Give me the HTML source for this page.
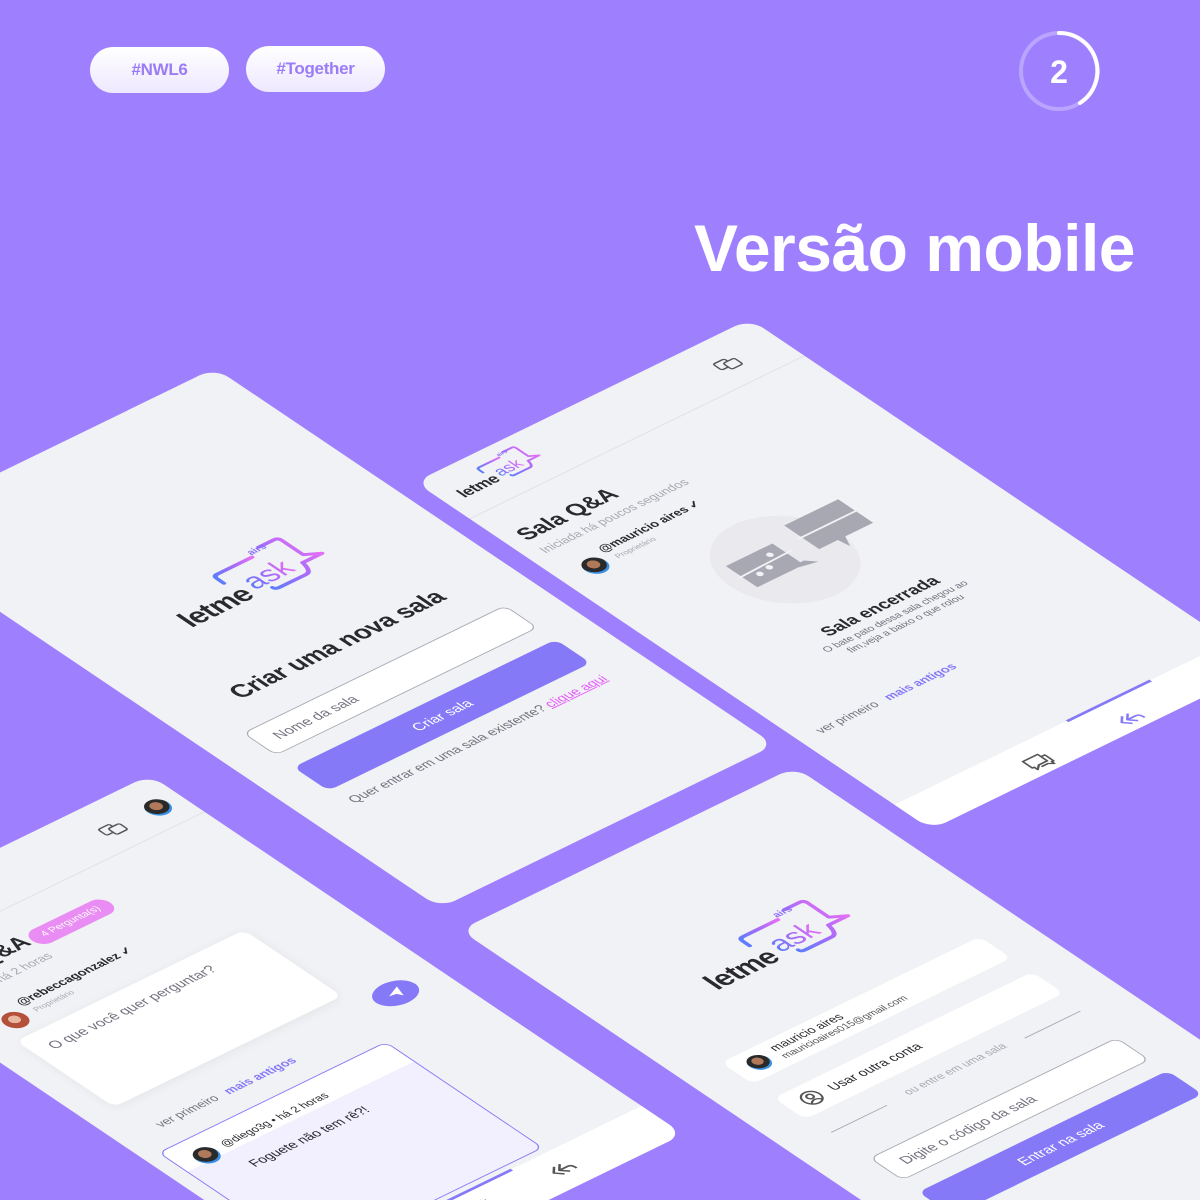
<!DOCTYPE html>
<html><head><meta charset="utf-8">
<style>
*{margin:0;padding:0;box-sizing:border-box}
html,body{width:1200px;height:1200px;overflow:hidden}
body{background:#9e7ffd;font-family:"Liberation Sans",sans-serif;position:relative}
.pill{position:absolute;height:46px;border-radius:23px;background:linear-gradient(#ffffff,#eee8ff);color:#9a7cf6;font-weight:bold;font-size:17px;display:flex;align-items:center;justify-content:center;letter-spacing:-0.3px}
.title{position:absolute;right:65px;top:210px;color:#fff;font-weight:bold;font-size:66px;letter-spacing:-0.5px;white-space:nowrap}
.scr{position:absolute;left:0;top:0;width:360px;background:#f1f2f5;border-radius:16px;transform-origin:0 0;overflow:hidden}
.abs{position:absolute;white-space:nowrap}
.inp{position:absolute;background:#fff;border:1px solid #a8a8b3;border-radius:8px;color:#737380;font-size:14px;padding-left:16px;display:flex;align-items:center}
.btn{position:absolute;background:#8579f8;border-radius:8px;color:#fff;font-size:14px;display:flex;align-items:center;justify-content:center}
.av{position:absolute;border-radius:50%;background:radial-gradient(circle at 50% 40%,#b07a5a 0 30%,#2a2a2a 32% 60%,#3a8fe0 62%)}
.gray{color:#a8a8b3}
.card{position:absolute;background:#fff;border-radius:8px}
</style></head><body>

<div class="pill" style="left:90px;top:47px;width:139px">#NWL6</div>
<div class="pill" style="left:246px;top:46px;width:139px">#Together</div>

<svg style="position:absolute;left:1016px;top:28px" width="86" height="86" viewBox="0 0 86 86">
<circle cx="43" cy="43" r="38" fill="none" stroke="#b9a5ff" stroke-width="4"/>
<path d="M43 5 A38 38 0 0 1 64 75" fill="none" stroke="#fff" stroke-width="4" stroke-linecap="round"/>
<text x="43" y="55" text-anchor="middle" font-family="Liberation Sans" font-weight="bold" font-size="32" fill="#fff">2</text>
</svg>

<div class="title">Versão mobile</div>

<svg width="0" height="0" style="position:absolute">
<defs>
<linearGradient id="lg" x1="0" y1="0" x2="1" y2="0"><stop offset="0" stop-color="#5e7dfa"/><stop offset="0.5" stop-color="#a46cf9"/><stop offset="1" stop-color="#e56ff5"/></linearGradient>
<symbol id="logo" viewBox="0 0 140 60">
<path d="M56 24 V17 Q56 13 60 13 H94" fill="none" stroke="url(#lg)" stroke-width="3.5" stroke-linecap="round"/>
<path d="M106 7 H121 Q125 7 125 11 V33 L137 40 H118 Q116 52 110 52 H84 Q80 52 80 49" fill="none" stroke="url(#lg)" stroke-width="3.5" stroke-linejoin="round" stroke-linecap="round"/>
<text x="95" y="11" font-family="Liberation Sans" font-weight="bold" font-size="9" fill="#8a6cfa">airs</text>
<text x="0" y="50" font-family="Liberation Sans" font-weight="bold" font-size="25" fill="#29292e" letter-spacing="-0.5">letme</text>
<text x="68" y="44" font-family="Liberation Sans" font-size="26" fill="url(#lg)">ask</text>
</symbol>
<symbol id="copy" viewBox="0 0 22 16"><rect x="1" y="1" width="12" height="10" rx="2" fill="none" stroke="#555" stroke-width="1.6"/><rect x="8" y="5" width="12" height="10" rx="2" fill="#f1f2f5" stroke="#555" stroke-width="1.6"/></symbol>
<symbol id="reply" viewBox="0 0 24 16"><path d="M9 2 L3 8 L9 14 M15 2 L9 8 L15 14 M9 8 H18 Q22 8 22 14" fill="none" stroke="currentColor" stroke-width="2" stroke-linejoin="round"/></symbol>
<symbol id="chat" viewBox="0 0 24 20"><path d="M2 2 H18 V13 H9 L4 17 V13 H2 Z M18 6 H22 V16 H20 V19 L16 16 H9" fill="none" stroke="#555" stroke-width="1.8" stroke-linejoin="round"/></symbol>
</defs></svg>

<!-- left top screen -->
<div class="scr" style="height:640px;transform:matrix(0.93,-0.453,0.875,0.589,-120,531)">
 <svg class="abs" style="left:104px;top:190px" width="155" height="66"><use href="#logo"/></svg>
 <div class="abs" style="left:0;width:360px;text-align:center;top:318px;font-weight:bold;font-size:24px;color:#29292e;letter-spacing:-0.3px">Criar uma nova sala</div>
 <div class="inp" style="left:39px;top:373px;width:282px;height:38px">Nome da sala</div>
 <div class="btn" style="left:39px;top:431px;width:282px;height:40px">Criar sala</div>
 <div class="abs" style="left:0;width:360px;text-align:center;top:484px;font-size:13px;color:#737380">Quer entrar em uma sala existente? <span style="color:#e559f9;text-decoration:underline">clique aqui</span></div>
</div>

<!-- middle screen -->
<div class="scr" style="height:590px;transform:matrix(0.93,-0.453,0.875,0.589,415,482)">
 <svg class="abs" style="left:16px;top:8px" width="88" height="38"><use href="#logo"/></svg>
 <svg class="abs" style="left:294px;top:26px" width="22" height="16"><use href="#copy"/></svg>
 <div class="abs" style="left:0;top:62px;width:360px;border-top:1px solid #e0e0e4"></div>
 <div class="abs" style="left:15px;top:92px;font-weight:bold;font-size:22px;color:#29292e">Sala Q&amp;A</div>
 <div class="abs gray" style="left:15px;top:122px;font-size:12px">Iniciada há poucos segundos</div>
 <div class="av" style="left:24px;top:158px;width:22px;height:22px"></div>
 <div class="abs" style="left:52px;top:149px;font-size:12px;font-weight:bold;color:#29292e">@mauricio aires ✓</div>
 <div class="abs gray" style="left:56px;top:166px;font-size:8px">Proprietário</div>
 <div class="abs" style="left:100px;top:195px;width:118px;height:118px;border-radius:50%;background:#e9e9ee"></div>
 <svg class="abs" style="left:108px;top:212px" width="150" height="80" viewBox="0 0 150 80">
  <path d="M8 20 H58 V52 H62 L70 60 L52 56 H8 Z" fill="#a8a8b3"/>
  <line x1="4" y1="38" x2="64" y2="36" stroke="#f1f2f5" stroke-width="2"/>
  <circle cx="22" cy="44" r="3" fill="#f1f2f5"/><circle cx="34" cy="42" r="3" fill="#f1f2f5"/><circle cx="46" cy="30" r="3" fill="#f1f2f5"/>
  <path d="M82 8 H140 V48 H110 L104 60 L102 48 H82 Z" fill="#a8a8b3"/>
  <line x1="78" y1="28" x2="144" y2="28" stroke="#f1f2f5" stroke-width="2"/>
 </svg>
 <div class="abs" style="left:0;width:350px;text-align:center;top:336px;font-weight:bold;font-size:17px;color:#29292e">Sala encerrada</div>
 <div class="abs gray" style="left:0;width:350px;text-align:center;top:358px;font-size:10px;line-height:12px;color:#737380">O bate pato dessa sala chegou ao<br>fim,veja a baixo o que rolou</div>
 <div class="abs" style="left:20px;top:432px;font-size:12px;color:#737380">ver primeiro &nbsp; <b style="color:#8579f8">mais antigos</b></div>
 <div class="abs" style="left:0;top:548px;width:360px;height:42px;background:#fff"></div>
 <div class="abs" style="left:185px;top:547px;width:90px;height:3px;background:#8579f8"></div>
 <svg class="abs" style="left:118px;top:565px" width="24" height="20"><use href="#chat"/></svg>
 <svg class="abs" style="left:215px;top:568px;color:#8579f8" width="24" height="16"><use href="#reply"/></svg>
</div>

<!-- bottom right screen -->
<div class="scr" style="height:700px;transform:matrix(0.93,-0.453,0.875,0.589,460,930)">
 <svg class="abs" style="left:104px;top:128px" width="155" height="66"><use href="#logo"/></svg>
 <div class="card" style="left:40px;top:256px;width:278px;height:36px">
  <div class="av" style="left:14px;top:8px;width:20px;height:20px"></div>
  <div class="abs" style="left:44px;top:4px;font-size:12px;color:#29292e">mauricio aires</div>
  <div class="abs" style="left:44px;top:19px;font-size:10px;color:#555">mauricioaires015@gmail.com</div>
 </div>
 <div class="card" style="left:40px;top:316px;width:278px;height:36px">
  <svg class="abs" style="left:14px;top:8px" width="20" height="20" viewBox="0 0 20 20"><circle cx="10" cy="10" r="8.5" fill="none" stroke="#555" stroke-width="1.8"/><circle cx="10" cy="8" r="3" fill="none" stroke="#555" stroke-width="1.8"/><path d="M4.5 16 Q10 10 15.5 16" fill="none" stroke="#555" stroke-width="1.8"/></svg>
  <div class="abs" style="left:44px;top:10px;font-size:13px;color:#29292e">Usar outra conta</div>
 </div>
 <div class="abs" style="left:44px;top:377px;width:60px;border-top:1px solid #a8a8b3"></div>
 <div class="abs gray" style="left:0;width:360px;text-align:center;top:369px;font-size:11px">ou entre em uma sala</div>
 <div class="abs" style="left:252px;top:377px;width:60px;border-top:1px solid #a8a8b3"></div>
 <div class="inp" style="left:44px;top:421px;width:266px;height:38px">Digite o código da sala</div>
 <div class="btn" style="left:43px;top:478px;width:268px;height:40px">Entrar na sala</div>
</div>

<!-- bottom left screen -->
<div class="scr" style="height:610px;transform:matrix(0.93,-0.453,0.875,0.589,-185,938)">
 <svg class="abs" style="left:276px;top:28px" width="22" height="16"><use href="#copy"/></svg>
 <div class="av" style="left:324px;top:25px;width:22px;height:22px"></div>
 <div class="abs" style="left:0;top:62px;width:360px;border-top:1px solid #e0e0e4"></div>
 <div class="abs" style="left:30px;top:90px;font-weight:bold;font-size:22px;color:#29292e">Sala Q&amp;A</div>
 <div class="abs" style="left:133px;top:96px;width:84px;height:22px;border-radius:11px;background:#e98cf3;color:#fff;font-size:10px;text-align:center;line-height:22px">4 Pergunta(s)</div>
 <div class="abs gray" style="left:30px;top:122px;font-size:12px">Iniciada há 2 horas</div>
 <div class="av" style="left:38px;top:166px;width:22px;height:22px;background:radial-gradient(circle at 50% 45%,#e8b8a0 0 30%,#b5503a 32%)"></div>
 <div class="abs" style="left:66px;top:155px;font-size:12px;font-weight:bold;color:#29292e">@rebeccagonzalez ✓</div>
 <div class="abs gray" style="left:70px;top:172px;font-size:8px">Proprietário</div>
 <div class="card" style="left:30px;top:198px;width:245px;height:112px;box-shadow:0 2px 10px rgba(0,0,0,0.06)">
  <div class="abs" style="left:16px;top:14px;font-size:14px;color:#737380">O que você quer perguntar?</div>
 </div>
 <div class="abs" style="left:290px;top:318px;width:42px;height:30px;border-radius:50%;background:#8579f8"></div>
 <svg class="abs" style="left:302px;top:325px" width="18" height="16" viewBox="0 0 18 16"><path d="M2 8 L16 2 L12 14 L9 9 Z" fill="#fff"/></svg>
 <div class="abs" style="left:40px;top:342px;font-size:12px;color:#737380">ver primeiro &nbsp; <b style="color:#8579f8">mais antigos</b></div>
 <div class="abs" style="left:15px;top:376px;width:245px;height:180px;border:1px solid #8579f8;border-radius:8px;background:linear-gradient(#fff 0 18%,#f2efff 18%)">
  <div class="av" style="left:16px;top:14px;width:22px;height:22px"></div>
  <div class="abs" style="left:46px;top:17px;font-size:11px;color:#29292e">@diego3g • há 2 horas</div>
  <div class="abs" style="left:46px;top:48px;font-size:13px;color:#29292e">Foguete não tem rê?!</div>
 </div>
 <div class="abs" style="left:0;top:562px;width:360px;height:48px;background:#fff"></div>
 <div class="abs" style="left:130px;top:561px;width:90px;height:3px;background:#8579f8"></div>
 <svg class="abs" style="left:160px;top:576px" width="18" height="20" viewBox="0 0 18 20"><path d="M2 4 H16 M6 4 V2 H12 V4 M4 4 L5 18 H13 L14 4" fill="none" stroke="#555" stroke-width="1.6"/></svg>
 <svg class="abs" style="left:240px;top:578px;color:#555" width="24" height="16"><use href="#reply"/></svg>
</div>

</body></html>
